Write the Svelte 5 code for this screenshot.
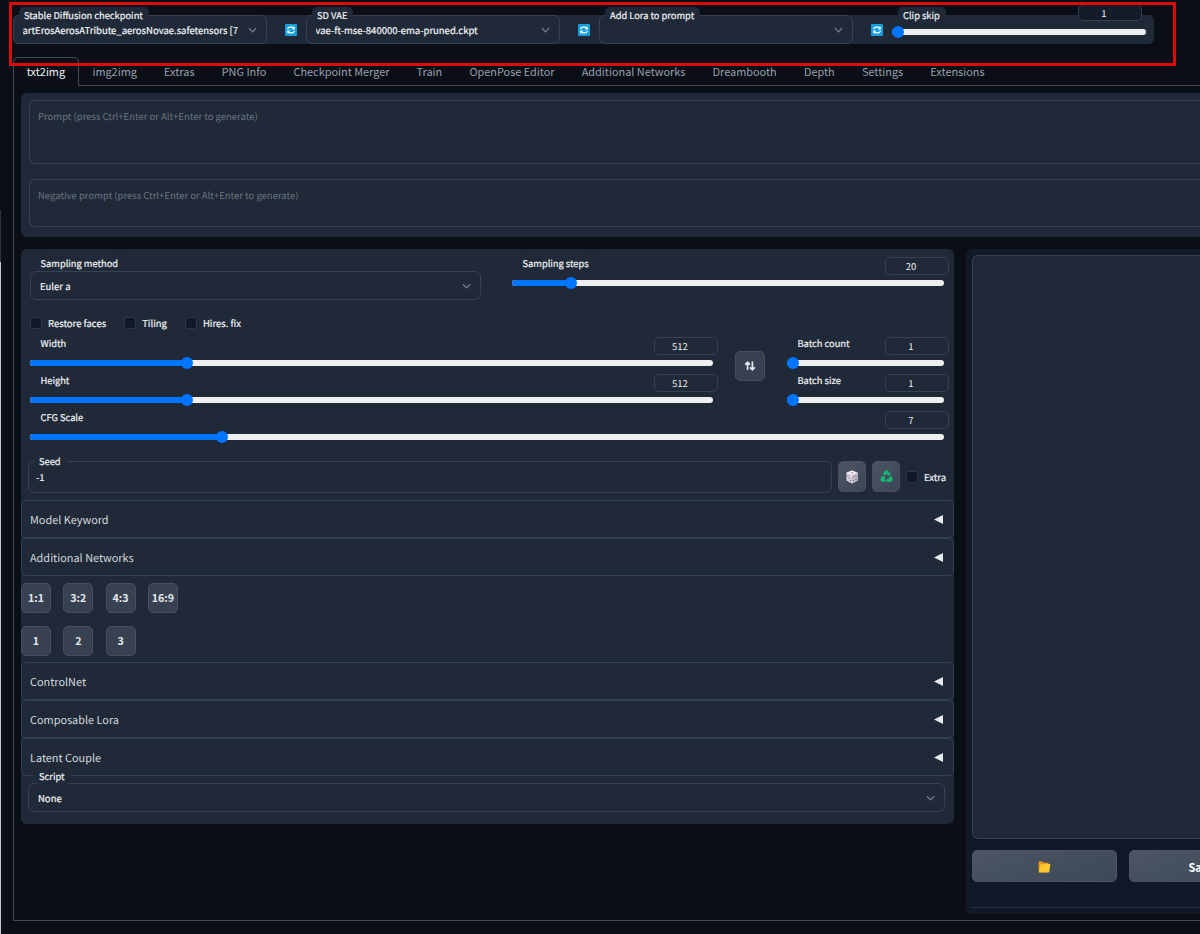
<script lang="ts">
  interface Slider {
    label: string;
    value: number;
    percent: number;
  }

  const tabs = [
    'txt2img', 'img2img', 'Extras', 'PNG Info', 'Checkpoint Merger', 'Train',
    'OpenPose Editor', 'Additional Networks', 'Dreambooth', 'Depth', 'Settings', 'Extensions'
  ];

  const quickSettings = [
    { label: 'Stable Diffusion checkpoint', value: 'artErosAerosATribute_aerosNovae.safetensors [7' },
    { label: 'SD VAE', value: 'vae-ft-mse-840000-ema-pruned.ckpt' },
    { label: 'Add Lora to prompt', value: '' }
  ];

  const clipSkip: Slider = { label: 'Clip skip', value: 1, percent: 0 };
  const steps: Slider = { label: 'Sampling steps', value: 20, percent: 12.6 };
  const sizes: Slider[] = [
    { label: 'Width', value: 512, percent: 22.5 },
    { label: 'Height', value: 512, percent: 22.5 }
  ];
  const batches: Slider[] = [
    { label: 'Batch count', value: 1, percent: 0 },
    { label: 'Batch size', value: 1, percent: 0 }
  ];
  const cfg: Slider = { label: 'CFG Scale', value: 7, percent: 20.6 };

  const toggles = ['Restore faces', 'Tiling', 'Hires. fix'];
  const ratios = ['1:1', '3:2', '4:3', '16:9'];
  const presets = ['1', '2', '3'];

  let activeTab = $state('txt2img');
</script>

{#snippet chevron()}
  <svg class="chevron" viewBox="0 0 10 6" width="9" height="6">
    <path d="M1 1l4 4 4-4" fill="none" stroke="currentColor" stroke-width="1.3" />
  </svg>
{/snippet}

{#snippet slider(s: Slider)}
  <div class="slider">
    <div class="slider-head">
      <span class="chip">{s.label}</span>
      <span class="number">{s.value}</span>
    </div>
    <div class="track">
      <div class="fill" style="width: calc({s.percent}% + {6 - s.percent * 0.12}px)"></div>
      <div class="thumb"></div>
    </div>
  </div>
{/snippet}

{#snippet accordion(title: string)}
  <div class="accordion">
    <span>{title}</span>
    <svg viewBox="0 0 9 9" width="9" height="9"><path d="M0 4.5L9 0v9z" fill="#e5e9ee" /></svg>
  </div>
{/snippet}

<div class="page">
  <div class="edge"></div>
  <div class="quick">
    {#each quickSettings as q}
      <div class="select">
        <span class="chip float">{q.label}</span>
        <span class="value">{q.value}</span>
        {@render chevron()}
      </div>
      <div class="refresh">
        <svg viewBox="0 0 12 12" width="12" height="12">
          <rect width="12" height="12" rx="1.2" fill="#149fdf" />
          <path d="M2.6 5.2q.5-2 2.4-2h2.2q1 0 1.5.9M9.4 6.8q-.5 2-2.4 2H4.8q-1 0-1.5-.9" fill="none" stroke="#fff" stroke-width="1.3" />
          <path d="M9.8 2.6v3H6.6zM2.2 9.4v-3h3.2z" fill="#fff" />
        </svg>
      </div>
    {/each}
    <div class="clip">{@render slider(clipSkip)}</div>
  </div>

  <div class="tabs">
    {#each tabs as tab}
      <button class="tab" class:active={tab === activeTab} onclick={() => (activeTab = tab)}>{tab}</button>
    {/each}
    <div class="tabs-rest"></div>
  </div>

  <div class="content">
    <div class="prompts">
      <div class="textarea prompt">Prompt (press Ctrl+Enter or Alt+Enter to generate)</div>
      <div class="textarea negative">Negative prompt (press Ctrl+Enter or Alt+Enter to generate)</div>
    </div>

    <div class="columns">
      <div class="settings">
        <div class="sampling">
          <div class="method">
            <span class="chip">Sampling method</span>
            <div class="select">
              <span class="value">Euler a</span>
              {@render chevron()}
            </div>
          </div>
          {@render slider(steps)}
        </div>

        <div class="toggles">
          {#each toggles as t}
            <span class="check"><i></i>{t}</span>
          {/each}
        </div>

        <div class="dimensions">
          <div class="sizes">
            {#each sizes as s}{@render slider(s)}{/each}
          </div>
          <button class="tool swap" aria-label="Swap width and height">
            <svg viewBox="0 0 12 12" width="12" height="12">
              <path d="M3.6 10V2.5M1.2 4.6L3.6 2.2l2.4 2.4M8.4 1.5v8M6 7.4l2.4 2.4 2.4-2.4" fill="none" stroke="#e5e7eb" stroke-width="1.7" />
            </svg>
          </button>
          <div class="batches">
            {#each batches as s}{@render slider(s)}{/each}
          </div>
        </div>
        <div class="cfg">{@render slider(cfg)}</div>

        <div class="seed">
          <div class="seed-input">
            <span class="chip float">Seed</span>
            -1
          </div>
          <button class="tool" aria-label="Random seed">
            <svg viewBox="0 0 14 14" width="14" height="14">
              <path d="M7 .6l5.6 2.2v7.6L7 13.4 1.4 10.4V2.8z" fill="#d9d2de" />
              <path d="M7 .6l5.6 2.2L7 5.2 1.4 2.8z" fill="#f6f1f7" />
              <path d="M7 5.2l5.6-2.4v7.6L7 13.4z" fill="#c4bccd" />
              <g fill="#5d566b">
                <ellipse cx="7" cy="2.8" rx=".9" ry=".5" />
                <circle cx="3" cy="5.6" r=".6" /><circle cx="5.4" cy="10.4" r=".6" /><circle cx="4.2" cy="8" r=".6" />
                <circle cx="8.6" cy="7" r=".6" /><circle cx="11" cy="6" r=".6" /><circle cx="8.6" cy="10.6" r=".6" /><circle cx="11" cy="9.4" r=".6" />
              </g>
            </svg>
          </button>
          <button class="tool" aria-label="Reuse seed">
            <svg viewBox="0 0 14 14" width="13" height="13">
              <g fill="none" stroke="#0fbf73" stroke-width="2.7">
                <path d="M4.3 5.2L6 2.3q.8-1.1 1.8 0l1 1.7" />
                <path d="M10.6 7l1.4 2.4q.6 1.7-1 1.9H8.6" />
                <path d="M5.8 11.3H3q-1.7-.2-.9-1.8l1-1.7" />
              </g>
              <path d="M7.2 5.4l3.8.6.2-3.8zM9.2 8.6v5L6.4 11.2zM.9 7.2l3.8-.8 1 3.6z" fill="#0fbf73" />
            </svg>
          </button>
          <span class="check extra"><i></i>Extra</span>
        </div>

        {@render accordion('Model Keyword')}
        {@render accordion('Additional Networks')}
        <div class="buttons">
          {#each ratios as r}<button class="tool">{r}</button>{/each}
        </div>
        <div class="buttons second">
          {#each presets as p}<button class="tool">{p}</button>{/each}
        </div>
        {@render accordion('ControlNet')}
        {@render accordion('Composable Lora')}
        {@render accordion('Latent Couple')}
        <div class="select script">
          <span class="chip float">Script</span>
          <span class="value">None</span>
          {@render chevron()}
        </div>
      </div>

      <div class="output">
        <div class="gallery"></div>
        <div class="actions">
          <button class="action" aria-label="Open folder">
            <svg viewBox="0 0 13 12" width="13" height="12">
              <path d="M.5 1.2Q.5.4 1.3.4h3l1.2 1.3h5v9.6H.8z" fill="#f19a12" />
              <path d="M2.6 3.2l9.8-.3-1.1 7.7q-.1.8-.9.8H.9z" fill="#fdc92f" />
            </svg>
          </button>
          <button class="action save">Save</button>
        </div>
        <div class="divider"></div>
      </div>
    </div>
  </div>

  <div class="highlight"></div>
</div>

<style>
  :global(body) {
    background: #0a0e17;
  }

  .page {
    position: relative;
    width: 1200px;
    height: 934px;
    overflow: hidden;
    box-sizing: border-box;
    padding: 15px 0 0 13px;
    background: #0a0e17;
    color: #f0f2f5;
    font-family: 'Noto Sans CJK SC', 'Source Sans Pro', sans-serif;
    font-size: 9.5px;
    font-weight: 400;
    line-height: 16px;
    text-rendering: geometricPrecision;
  }

  .page * {
    box-sizing: border-box;
  }

  button {
    font: inherit;
    color: inherit;
    padding: 0;
    margin: 0;
  }

  svg {
    display: block;
    flex-shrink: 0;
  }

  .edge {
    position: absolute;
    left: 0;
    top: 210px;
    width: 1px;
    height: 724px;
    background: linear-gradient(#30353d 52px, #c3c7cc 52px);
  }

  .highlight {
    position: absolute;
    left: 9px;
    top: 2px;
    width: 1167px;
    height: 64px;
    border: 3px solid #dc0b0b;
    pointer-events: none;
  }

  /* quick settings */
  .quick {
    display: flex;
    width: 1141px;
    height: 29px;
    background: #1f2937;
    border-radius: 5px;
  }

  .select {
    position: relative;
    display: flex;
    align-items: center;
    justify-content: space-between;
    height: 29px;
    padding: 0 9px 0 9px;
    border: 1px solid #364252;
    border-radius: 6px;
  }

  .quick .select {
    width: 254px;
  }

  .value {
    white-space: nowrap;
    overflow: hidden;
  }

  .value,
  .chip,
  .check,
  .seed-input {
    -webkit-text-stroke: 0.2px currentColor;
  }

  .quick .value {
    width: 215px;
    margin-left: -0.5px;
  }

  .chevron {
    color: #7b8492;
  }

  .chip {
    padding: 0 6px 0 5px;
    background: #1f2937;
    border-radius: 5px;
    font-size: 9.3px;
    white-space: nowrap;
  }

  .chip.float {
    position: absolute;
    left: 5px;
    top: -9px;
  }

  .refresh {
    width: 39px;
    padding: 9px 0 0 18px;
  }

  .clip {
    flex: 1;
    margin-top: -10px;
    padding-right: 8px;
  }

  /* slider */
  .slider-head {
    display: flex;
    justify-content: space-between;
    align-items: flex-start;
    height: 18px;
    margin: 0 -5px 0 5.5px;
  }

  .slider-head .chip {
    margin-top: -2px;
  }

  .number {
    width: 64px;
    height: 18px;
    padding: 0 12px 0 0;
    border: 1px solid #364252;
    border-radius: 5px;
    text-align: center;
  }

  .track {
    display: flex;
    align-items: center;
    height: 6px;
    margin-top: 5px;
    background: #efefef;
    border-radius: 3px;
  }

  .fill {
    height: 6px;
    background: #0075ff;
    border-radius: 3px 0 0 3px;
  }

  .thumb {
    width: 12px;
    height: 12px;
    margin-left: -6px;
    background: #0075ff;
    border-radius: 50%;
    flex-shrink: 0;
  }

  .clip .slider-head {
    margin: 0 4px 0 6px;
  }

  .clip .slider-head .chip {
    margin-top: 2px;
  }

  .clip .number {
    height: 17px;
    margin-top: -1px;
    background: #141c29;
  }

  .clip .track {
    margin-top: 6px;
  }

  /* tabs */
  .tabs {
    display: flex;
    height: 29px;
    margin-top: 13px;
  }

  .tab {
    padding: 0 13.6px;
    border: 0 solid #424b57;
    border-bottom-width: 1px;
    background: none;
    color: #98a0ac;
    font-size: 10.9px;
    white-space: nowrap;
  }

  .tab.active {
    padding: 0 12.7px 2px;
    border-width: 1px 1px 0;
    border-radius: 5px 5px 0 0;
    color: #f0f2f5;
  }

  .tabs-rest {
    flex: 1;
    border-bottom: 1px solid #424b57;
  }

  .content {
    height: 835px;
    padding: 7px 0 0 7px;
    border: 1px solid #424b57;
    border-width: 0 0 1px 1px;
  }

  .prompts {
    height: 144px;
    padding: 7px 0 0 8px;
    background: #1f2937;
    border-radius: 6px 0 0 6px;
  }

  .textarea {
    padding: 7px 8px;
    border: 1px solid #364252;
    border-right: 0;
    border-radius: 6px 0 0 6px;
    color: #6b7482;
  }

  .prompt {
    height: 64px;
  }

  .negative {
    height: 48px;
    margin-top: 15px;
  }

  .columns {
    display: flex;
    gap: 12px;
    margin-top: 12px;
  }

  .settings {
    width: 933px;
    height: 575px;
    flex-shrink: 0;
    background: #1f2937;
    border-radius: 6px;
  }

  .sampling {
    display: flex;
    gap: 31px;
    height: 62px;
    padding: 8px 10px 0 9px;
  }

  .method {
    width: 451px;
    display: flex;
    flex-direction: column;
    align-items: flex-start;
  }

  .method .chip {
    margin: -2px 0 0 5.5px;
  }

  .method .select {
    width: 100%;
  }

  .sampling .slider {
    flex: 1;
  }

  .toggles {
    display: flex;
    gap: 18px;
    height: 26px;
    padding: 4px 0 0 9px;
  }

  .check {
    display: flex;
    align-items: center;
    gap: 6px;
    height: 16px;
  }

  .check i {
    width: 12px;
    height: 12px;
    background: #111827;
    border: 1px solid #2c3848;
    border-radius: 3px;
  }

  .dimensions {
    display: flex;
    padding: 0 10px 0 9px;
  }

  .sizes {
    width: 683px;
  }

  .sizes .slider,
  .batches .slider {
    height: 37px;
  }

  .batches {
    flex: 1;
    margin-left: 22px;
  }

  .tool {
    display: flex;
    align-items: center;
    justify-content: center;
    width: 30px;
    height: 30px;
    flex-shrink: 0;
    background: #374151;
    border: 1px solid #465060;
    border-radius: 5px;
    color: #e3e6ea;
    font-size: 10.7px;
    font-weight: 600;
  }

  .swap {
    margin: 14px 0 0 22px;
  }

  .cfg {
    height: 50px;
    padding: 0 10px 0 9px;
  }

  .seed {
    display: flex;
    gap: 6px;
    height: 39px;
    padding: 0 7px;
  }

  .seed-input {
    position: relative;
    width: 804px;
    height: 32px;
    flex-shrink: 0;
    padding: 8px 7px;
    border: 1px solid #364252;
    border-radius: 6px;
    line-height: 15px;
  }

  .seed-input .chip {
    top: -8px;
  }

  .seed .tool {
    width: 28px;
    height: 31px;
    background: linear-gradient(135deg, #4b5563, #3c4656);
  }

  .extra {
    margin-top: 8px;
  }

  .accordion {
    display: flex;
    align-items: center;
    justify-content: space-between;
    height: 38px;
    padding: 0 10px 0 8px;
    border: 1px solid #334050;
    border-radius: 5px;
    color: #d5d9df;
    font-size: 10.9px;
  }

  .accordion span {
    padding-top: 1px;
  }

  .buttons {
    display: flex;
    gap: 12.3px;
    height: 43px;
    padding-top: 7px;
  }

  .buttons .tool {
    padding-bottom: 1px;
  }

  .script {
    margin: 7px 9px 0 7px;
  }

  .script .chip {
    top: -16px;
  }

  .output {
    flex: 1;
    height: 665px;
    padding: 6px 0 0 6px;
    background: #111827;
    border-radius: 6px 0 0 6px;
  }

  .gallery {
    height: 584px;
    background: #1f2937;
    border: 1px solid #364252;
    border-right: 0;
    border-radius: 6px 0 0 6px;
  }

  .actions {
    display: flex;
    gap: 12px;
    margin-top: 11px;
  }

  .action {
    display: flex;
    align-items: center;
    justify-content: center;
    width: 145px;
    height: 32px;
    flex-shrink: 0;
    padding-top: 2px;
    background: linear-gradient(160deg, #4b5563, #3d4858);
    border: 1px solid #4b5563;
    border-radius: 5px;
    color: #fff;
    font-size: 11px;
    font-weight: 700;
  }

  .divider {
    height: 1px;
    margin-top: 25px;
    background: #273444;
  }
</style>
